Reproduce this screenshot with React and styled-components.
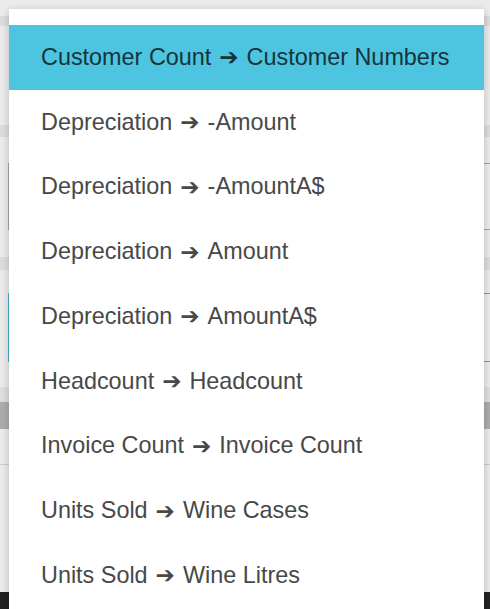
import React from 'react';
import styled, { createGlobalStyle } from 'styled-components';

const GlobalStyle = createGlobalStyle`
  html, body {
    margin: 0;
    padding: 0;
    overflow: hidden;
  }
  body {
    font-family: "Liberation Sans", Arial, "DejaVu Sans", sans-serif;
  }
`;

const options = [
  ['Customer Count', 'Customer Numbers'],
  ['Depreciation', '-Amount'],
  ['Depreciation', '-AmountA$'],
  ['Depreciation', 'Amount'],
  ['Depreciation', 'AmountA$'],
  ['Headcount', 'Headcount'],
  ['Invoice Count', 'Invoice Count'],
  ['Units Sold', 'Wine Cases'],
  ['Units Sold', 'Wine Litres'],
];

const Screen = styled.div`
  position: relative;
  width: 490px;
  height: 609px;
  overflow: hidden;
`;

const Page = styled.div`
  display: flex;
  flex-direction: column;
  height: 100%;
  background: #ebebeb;
`;

const Spacer = styled.div`
  flex: 0 0 ${props => props.size}px;
`;

const Band = styled.div`
  flex: 0 0 ${props => props.size}px;
  background: ${props => props.tone || '#dcdcdc'};
`;

const Field = styled.div`
  flex: 0 0 ${props => props.size}px;
  box-sizing: border-box;
  margin-left: 8px;
  border: 1px solid ${props => (props.active ? '#3db5d2' : '#a3a3a3')};
  border-right: none;
  background: #ececec;
`;

const Rule = styled.div`
  flex: 0 0 1px;
  background: #cdcdcd;
`;

const Footer = styled.div`
  flex: 1 1 auto;
  margin-top: 127px;
  background: #222222;
`;

const Menu = styled.ul`
  position: absolute;
  top: 9px;
  left: 9px;
  width: 475px;
  height: 620px;
  margin: 0;
  padding: 16px 0 0;
  list-style: none;
  background: #ffffff;
  box-shadow: 0 2px 8px rgba(0, 0, 0, 0.22);
`;

const Option = styled.li`
  display: flex;
  align-items: center;
  height: 64.75px;
  padding-left: 32px;
  font-size: 23.4px;
  color: ${props => (props.selected ? '#17343c' : '#484848')};
  background: ${props => (props.selected ? '#4dc5e0' : 'transparent')};
  white-space: nowrap;
`;

const Arrow = styled.span`
  font-family: "DejaVu Sans", sans-serif;
  font-size: 23px;
  margin: 0 8px 0 8px;
`;

export default function App() {
  return (
    <Screen>
      <GlobalStyle />
      <Page>
        <Spacer size={16} />
        <Band size={10} />
        <Spacer size={99} />
        <Band size={12} />
        <Spacer size={26} />
        <Field size={67} />
        <Spacer size={27} />
        <Band size={13} />
        <Spacer size={23} />
        <Field size={69} active />
        <Spacer size={25} />
        <Band size={15} tone="#dedede" />
        <Band size={27} tone="#acacac" />
        <Spacer size={35} />
        <Rule />
        <Footer />
      </Page>
      <Menu>
        {options.map(([from, to], i) => (
          <Option key={`${from}-${to}`} selected={i === 0}>
            {from}
            <Arrow>➔</Arrow>
            {to}
          </Option>
        ))}
      </Menu>
    </Screen>
  );
}
